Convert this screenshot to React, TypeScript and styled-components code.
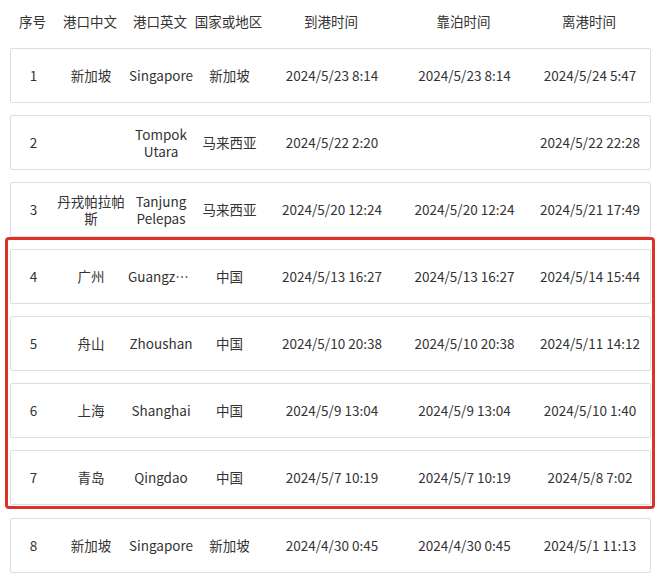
import React from "react";
import styled, { createGlobalStyle } from "styled-components";

const G = createGlobalStyle`
  body { margin: 0; background: #fff; font-family: "Noto Sans CJK SC", "Noto Sans", sans-serif; color: #333; }
`;
const cols = "45px 70px 70px 67px 138px 127px 124px";
const Page = styled.div`
  padding: 0 6px 0 10px;
  display: flex; flex-direction: column;
`;
const Header = styled.div`
  display: grid; grid-template-columns: ${cols};
  height: 42px; align-items: center; font-size: 13.5px; text-align: center; margin-bottom: 6px;
  white-space: nowrap;
  & > div { display: flex; justify-content: center; }
`;
const List = styled.div`
  display: flex; flex-direction: column;
`;
const Row = styled.div`
  display: grid; grid-template-columns: ${cols};
  height: 55px; box-sizing: border-box; border: 1px solid #dedede; border-radius: 2px;
  align-items: center; text-align: center; font-size: 13.5px; line-height: 17px;
  margin-top: ${p => p.$gap}px;
`;
const Cell = styled.div<{ $ellipsis?: boolean }>`
  padding: 0;
  ${p => p.$ellipsis ? "white-space: nowrap; overflow: hidden; text-overflow: ellipsis; padding: 0 2px;" : ""}
`;
const Highlight = styled.div`
  margin: 0 -4px 0 -5px; border: 3px solid #e0302a; border-radius: 4px;
  padding: 9px 1px 1px 2px; display: flex; flex-direction: column;
`;
const data = [
  ["1","新加坡","Singapore","新加坡","2024/5/23 8:14","2024/5/23 8:14","2024/5/24 5:47"],
  ["2","","Tompok Utara","马来西亚","2024/5/22 2:20","","2024/5/22 22:28"],
  ["3","丹戎帕拉帕斯","Tanjung Pelepas","马来西亚","2024/5/20 12:24","2024/5/20 12:24","2024/5/21 17:49"],
  ["4","广州","Guangzhou","中国","2024/5/13 16:27","2024/5/13 16:27","2024/5/14 15:44"],
  ["5","舟山","Zhoushan","中国","2024/5/10 20:38","2024/5/10 20:38","2024/5/11 14:12"],
  ["6","上海","Shanghai","中国","2024/5/9 13:04","2024/5/9 13:04","2024/5/10 1:40"],
  ["7","青岛","Qingdao","中国","2024/5/7 10:19","2024/5/7 10:19","2024/5/8 7:02"],
  ["8","新加坡","Singapore","新加坡","2024/4/30 0:45","2024/4/30 0:45","2024/5/1 11:13"],
];
const R = ({ d, gap }: { d: string[]; gap: number }) => (
  <Row $gap={gap}>{d.map((c, i) => <Cell key={i} $ellipsis={c === "Guangzhou"}>{c}</Cell>)}</Row>
);
export default function App() {
  return (
    <Page>
      <G />
      <Header>{["序号","港口中文","港口英文","国家或地区","到港时间","靠泊时间","离港时间"].map(h => <div key={h}>{h}</div>)}</Header>
      <List>
        {data.slice(0, 3).map((d, i) => <R key={d[0]} d={d} gap={i === 0 ? 0 : 12} />)}
        <Highlight>{data.slice(3, 7).map((d, i) => <R key={d[0]} d={d} gap={i === 0 ? 0 : 12} />)}</Highlight>
        <R d={data[7]} gap={9} />
      </List>
    </Page>
  );
}
